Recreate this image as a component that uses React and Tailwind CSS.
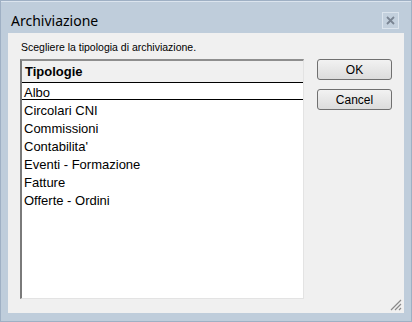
export default function App() {
  const items = ["Circolari CNI", "Commissioni", "Contabilita'", "Eventi - Formazione", "Fatture", "Offerte - Ordini"];
  return (
    <div className="w-[412px] h-[322px] bg-[#bfcddb] border border-[#9fb0c4] flex flex-col overflow-hidden" style={{ fontFamily: '"Liberation Sans", Arial, sans-serif' }}>
      <div className="h-[32px] shrink-0 flex items-center justify-between pl-[10px] pr-[12px] border-t border-[#dbe4ee]">
        <span className="text-[14px] text-black leading-none mt-[7px]" style={{ fontFamily: '"Noto Sans", sans-serif' }}>Archiviazione</span>
        <div className="w-[17px] h-[17px] border border-[#dce5ee] bg-[#c3d0dd] flex items-center justify-center mt-[5px]">
          <svg width="9" height="9" viewBox="0 0 9 9">
            <path d="M1 1 L8 8 M8 1 L1 8" stroke="#7a8593" strokeWidth="1.8" />
          </svg>
        </div>
      </div>
      <div className="flex-1 mx-[7px] mb-[8px] bg-[#f0f0f0] relative flex flex-col pt-[8px] pl-[12px] pr-[11px] pb-[14px]">
        <div className="text-[10.5px] text-black leading-[13px] pl-[1px]">Scegliere la tipologia di archiviazione.</div>
        <div className="flex flex-1 mt-[5px] gap-[13px]">
          <div className="w-[284px] flex flex-col bg-white border-t-2 border-l-2 border-t-[#8e8e8e] border-l-[#7a7a7a] border-r border-b border-r-[#e3e3e3] border-b-[#e3e3e3]">
            <div className="h-[22px] shrink-0 bg-[#f0f0f0] border-b border-[#000] flex items-center pl-[3px] text-[13px] font-bold text-black">Tipologie</div>
            <div className="h-[17px] shrink-0 border-b border-black flex items-center pl-[2px] pt-[3px] text-[13px] text-black">Albo</div>
            {items.map((t) => (
              <div key={t} className="h-[18px] shrink-0 flex items-center pl-[2px] pt-[4px] text-[13px] text-black">{t}</div>
            ))}
          </div>
          <div className="flex flex-col gap-[9px]">
            <button className="w-[75px] h-[21px] rounded-[3px] border border-[#707070] bg-gradient-to-b from-[#f2f2f2] to-[#dcdcdc] text-[12px] text-black flex items-center justify-center">OK</button>
            <button className="w-[75px] h-[21px] rounded-[3px] border border-[#707070] bg-gradient-to-b from-[#f2f2f2] to-[#dcdcdc] text-[12px] text-black flex items-center justify-center">Cancel</button>
          </div>
        </div>
        <svg className="absolute right-[2px] bottom-[2px]" width="12" height="12" viewBox="0 0 12 12">
          <path d="M11 1 L1 11 M11 5 L5 11 M11 9 L9 11" stroke="#8a8a8a" strokeWidth="1.2" />
        </svg>
      </div>
    </div>
  );
}
